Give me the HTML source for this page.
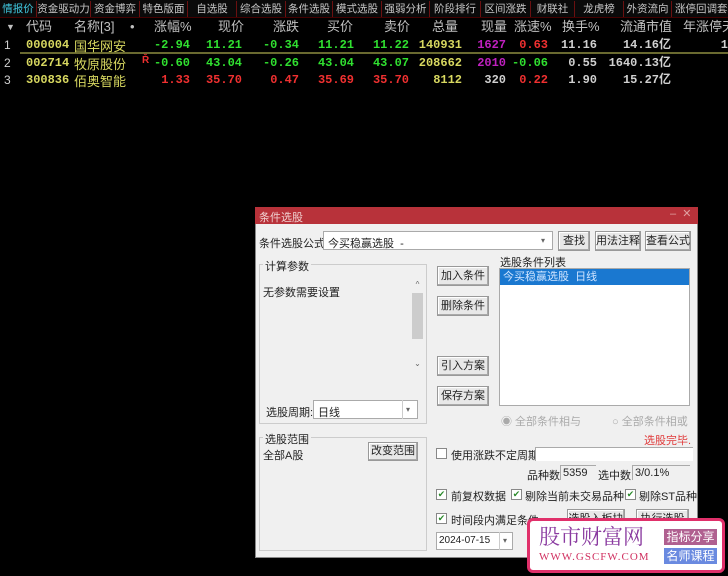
<!DOCTYPE html>
<html><head><meta charset="utf-8"><style>
*{margin:0;padding:0;box-sizing:border-box}
body{width:728px;height:576px;background:#000;position:relative;overflow:hidden;font-family:"Liberation Sans","Noto Sans CJK SC",sans-serif}
.a{position:absolute;white-space:nowrap}
.tab{position:absolute;top:1px;height:16px;font-size:10.5px;color:#c8c8c8;text-align:center;line-height:16px;border-right:1px solid #6a1010;overflow:hidden;white-space:nowrap}
.h{position:absolute;top:19px;font-size:13px;color:#c0c0c0;line-height:16px;white-space:nowrap}
.c{position:absolute;font-size:12px;font-weight:bold;line-height:16px;text-align:right;white-space:nowrap;font-family:"Liberation Mono","Noto Sans CJK SC",monospace}
.y{color:#d8d860}.g{color:#30e030}.r{color:#f03030}.w{color:#d0d0d0}.p{color:#c020c0}
.d{font-size:11px;color:#222}
.btn{position:absolute;background:#e8e8e8;border:1px solid #999;box-shadow:inset -1px -1px #aaa,inset 1px 1px #fff;font-size:11px;color:#222;text-align:center;white-space:nowrap}
.box{position:absolute;background:#fff;border:1px solid #aaa}
.grp{position:absolute;border:1px solid #ccc}
.cb{position:absolute;width:11px;height:11px;border:1px solid #888;background:#fff;font-size:9px;color:#2a8a2a;line-height:9px;text-align:center}
</style></head><body>
<div class="a" style="left:0;top:0;width:728px;height:18px;background:#0a0a0a;border-bottom:1px solid #400"></div>
<div class="tab" style="left:0;width:37px;color:#40c8e0">情报价</div>
<div class="tab" style="left:37px;width:54px">资金驱动力</div>
<div class="tab" style="left:91px;width:49px">资金博弈</div>
<div class="tab" style="left:140px;width:48px">特色版面</div>
<div class="tab" style="left:188px;width:49px">自选股</div>
<div class="tab" style="left:237px;width:49px">综合选股</div>
<div class="tab" style="left:286px;width:47px">条件选股</div>
<div class="tab" style="left:333px;width:49px">模式选股</div>
<div class="tab" style="left:382px;width:48px">强弱分析</div>
<div class="tab" style="left:430px;width:51px">阶段排行</div>
<div class="tab" style="left:481px;width:50px">区间涨跌</div>
<div class="tab" style="left:531px;width:44px">财联社</div>
<div class="tab" style="left:575px;width:49px">龙虎榜</div>
<div class="tab" style="left:624px;width:48px">外资流向</div>
<div class="tab" style="left:672px;width:60px;text-align:left;padding-left:3px">涨停回调套利</div>

<div class="h" style="left:6px;font-size:9px">▼</div>
<div class="h" style="left:26px">代码</div>
<div class="h" style="left:74px">名称[3]</div>
<div class="h" style="left:130px">•</div>
<div class="h" style="left:154px">涨幅%</div>
<div class="h" style="left:218px">现价</div>
<div class="h" style="left:273px">涨跌</div>
<div class="h" style="left:327px">买价</div>
<div class="h" style="left:384px">卖价</div>
<div class="h" style="left:432px">总量</div>
<div class="h" style="left:481px">现量</div>
<div class="h" style="left:514px">涨速%</div>
<div class="h" style="left:562px">换手%</div>
<div class="h" style="left:620px">流通市值</div>
<div class="h" style="left:683px">年涨停天</div>

<div class="a" style="left:20px;top:52px;width:708px;height:2px;background:#6a6a30"></div>

<div class="a w" style="left:4px;top:37px;font-size:12px;line-height:16px">1</div>
<div class="a w" style="left:4px;top:55px;font-size:12px;line-height:16px">2</div>
<div class="a w" style="left:4px;top:72px;font-size:12px;line-height:16px">3</div>
<div class="c y" style="left:26px;top:37px">000004</div>
<div class="c y" style="left:26px;top:55px">002714</div>
<div class="c y" style="left:26px;top:72px">300836</div>
<div class="a y" style="left:74px;top:36px;font-size:13px">国华网安</div>
<div class="a y" style="left:74px;top:54px;font-size:13px">牧原股份</div>
<div class="a y" style="left:74px;top:71px;font-size:13px">佰奥智能</div>
<div class="a r" style="left:142px;top:55px;font-size:10px;font-weight:bold">Ř</div>

<div class="c g" style="right:538px;top:37px">-2.94</div><div class="c g" style="right:486px;top:37px">11.21</div><div class="c g" style="right:429px;top:37px">-0.34</div><div class="c g" style="right:374px;top:37px">11.21</div><div class="c g" style="right:319px;top:37px">11.22</div><div class="c y" style="right:266px;top:37px">140931</div><div class="c p" style="right:222px;top:37px">1627</div><div class="c r" style="right:180px;top:37px">0.63</div><div class="c w" style="right:131px;top:37px">11.16</div><div class="c w" style="right:57px;top:37px">14.16亿</div><div class="c w" style="right:0;top:37px">1</div>

<div class="c g" style="right:538px;top:55px">-0.60</div><div class="c g" style="right:486px;top:55px">43.04</div><div class="c g" style="right:429px;top:55px">-0.26</div><div class="c g" style="right:374px;top:55px">43.04</div><div class="c g" style="right:319px;top:55px">43.07</div><div class="c y" style="right:266px;top:55px">208662</div><div class="c p" style="right:222px;top:55px">2010</div><div class="c g" style="right:180px;top:55px">-0.06</div><div class="c w" style="right:131px;top:55px">0.55</div><div class="c w" style="right:57px;top:55px">1640.13亿</div>

<div class="c r" style="right:538px;top:72px">1.33</div><div class="c r" style="right:486px;top:72px">35.70</div><div class="c r" style="right:429px;top:72px">0.47</div><div class="c r" style="right:374px;top:72px">35.69</div><div class="c r" style="right:319px;top:72px">35.70</div><div class="c y" style="right:266px;top:72px">8112</div><div class="c w" style="right:222px;top:72px">320</div><div class="c r" style="right:180px;top:72px">0.22</div><div class="c w" style="right:131px;top:72px">1.90</div><div class="c w" style="right:57px;top:72px">15.27亿</div>

<div class="a" style="left:255px;top:207px;width:443px;height:351px;background:#f0f0f0;border:1px solid #888"></div>
<div class="a" style="left:255px;top:207px;width:443px;height:17px;background:#b8323a"></div>
<div class="a" style="left:259px;top:209px;font-size:11px;color:#f0d0d0">条件选股</div>
<div class="a" style="left:670px;top:207px;font-size:11px;color:#e0a0a0">–&nbsp;&nbsp;✕</div>

<div class="a d" style="left:259px;top:235px">条件选股公式</div>
<div class="box" style="left:323px;top:231px;width:230px;height:19px"></div>
<div class="a d" style="left:328px;top:235px">今买稳赢选股&nbsp;&nbsp;-</div>
<div class="a" style="left:541px;top:236px;font-size:8px;color:#666">▾</div>
<div class="btn" style="left:558px;top:231px;width:32px;height:20px;line-height:18px">查找</div>
<div class="btn" style="left:595px;top:231px;width:46px;height:20px;line-height:18px">用法注释</div>
<div class="btn" style="left:645px;top:231px;width:46px;height:20px;line-height:18px">查看公式</div>

<div class="grp" style="left:259px;top:264px;width:168px;height:160px"></div>
<div class="a d" style="left:263px;top:258px;background:#f0f0f0;padding:0 2px">计算参数</div>
<div class="a d" style="left:263px;top:284px">无参数需要设置</div>
<div class="a" style="left:412px;top:280px;width:11px;height:95px;color:#666;font-size:8px;text-align:center">
<div style="line-height:10px">^</div><div style="margin-top:3px;height:46px;background:#ccc"></div><div style="margin-top:20px">⌄</div></div>
<div class="a d" style="left:266px;top:404px">选股周期:</div>
<div class="box" style="left:313px;top:400px;width:105px;height:19px"></div>
<div class="a d" style="left:318px;top:404px">日线</div>
<div class="a" style="left:402px;top:400px;width:1px;height:19px;background:#ccc"></div>
<div class="a" style="left:406px;top:405px;font-size:8px;color:#666">▾</div>

<div class="grp" style="left:259px;top:437px;width:168px;height:114px"></div>
<div class="a d" style="left:263px;top:431px;background:#f0f0f0;padding:0 2px">选股范围</div>
<div class="a d" style="left:263px;top:447px">全部A股</div>
<div class="btn" style="left:368px;top:442px;width:50px;height:19px;line-height:17px">改变范围</div>

<div class="btn" style="left:437px;top:266px;width:52px;height:20px;line-height:18px">加入条件</div>
<div class="btn" style="left:437px;top:296px;width:52px;height:20px;line-height:18px">删除条件</div>
<div class="btn" style="left:437px;top:356px;width:52px;height:20px;line-height:18px">引入方案</div>
<div class="btn" style="left:437px;top:386px;width:52px;height:20px;line-height:18px">保存方案</div>

<div class="a d" style="left:500px;top:254px">选股条件列表</div>
<div class="box" style="left:499px;top:268px;width:191px;height:138px"></div>
<div class="a" style="left:500px;top:269px;width:189px;height:16px;background:#1a78d0;color:#cfe4ff;font-size:11px;line-height:16px;padding-left:3px">今买稳赢选股&nbsp;&nbsp;日线</div>
<div class="a" style="left:501px;top:413px;font-size:11px;color:#aaa">◉&nbsp;全部条件相与</div>
<div class="a" style="left:612px;top:413px;font-size:11px;color:#aaa">○&nbsp;全部条件相或</div>
<div class="a" style="left:644px;top:432px;font-size:11px;color:#e03a3a">选股完毕.</div>

<div class="cb" style="left:436px;top:448px"></div>
<div class="a d" style="left:451px;top:447px">使用涨跌不定周期</div>
<div class="a" style="left:535px;top:447px;width:158px;height:14px;background:#fff;border-top:1px solid #aaa;border-left:1px solid #aaa"></div>
<div class="a d" style="left:527px;top:467px">品种数</div>
<div class="a d" style="left:560px;top:465px;border-top:1px solid #aaa;border-left:1px solid #aaa;width:36px;padding:1px 2px">5359</div>
<div class="a d" style="left:598px;top:467px">选中数</div>
<div class="a d" style="left:632px;top:465px;border-top:1px solid #aaa;border-left:1px solid #aaa;width:58px;padding:1px 2px">3/0.1%</div>

<div class="cb" style="left:436px;top:489px">✔</div><div class="a d" style="left:451px;top:488px">前复权数据</div>
<div class="cb" style="left:511px;top:489px">✔</div><div class="a d" style="left:525px;top:488px">剔除当前未交易品种</div>
<div class="cb" style="left:625px;top:489px">✔</div><div class="a d" style="left:639px;top:488px">剔除ST品种</div>
<div class="cb" style="left:436px;top:513px">✔</div><div class="a d" style="left:451px;top:512px">时间段内满足条件</div>
<div class="btn" style="left:567px;top:509px;width:58px;height:20px;line-height:18px">选股入板块</div>
<div class="btn" style="left:636px;top:509px;width:53px;height:20px;line-height:18px">执行选股</div>
<div class="box" style="left:436px;top:532px;width:77px;height:18px"></div>
<div class="a d" style="left:439px;top:535px;font-size:10px">2024-07-15</div>
<div class="a" style="left:499px;top:532px;width:1px;height:18px;background:#ccc"></div>
<div class="a" style="left:503px;top:536px;font-size:8px;color:#666">▾</div>

<div class="a" style="left:527px;top:518px;width:198px;height:55px;background:#fff;border:3px solid #e0306a;border-radius:6px"></div>
<div class="a" style="left:539px;top:524px;font-size:21px;color:#8a3aa0;font-family:'Noto Serif CJK SC',serif;line-height:24px">股市财富网</div>
<div class="a" style="left:539px;top:551px;font-size:11px;color:#d03060;font-family:'Liberation Serif',serif;letter-spacing:1px">WWW.GSCFW.COM</div>
<div class="a" style="left:664px;top:529px;width:53px;height:16px;background:#b06090;color:#fff;font-size:12px;line-height:16px;text-align:center">指标分享</div>
<div class="a" style="left:664px;top:548px;width:53px;height:16px;background:#6a8ae0;color:#fff;font-size:12px;line-height:16px;text-align:center">名师课程</div>
</body></html>
